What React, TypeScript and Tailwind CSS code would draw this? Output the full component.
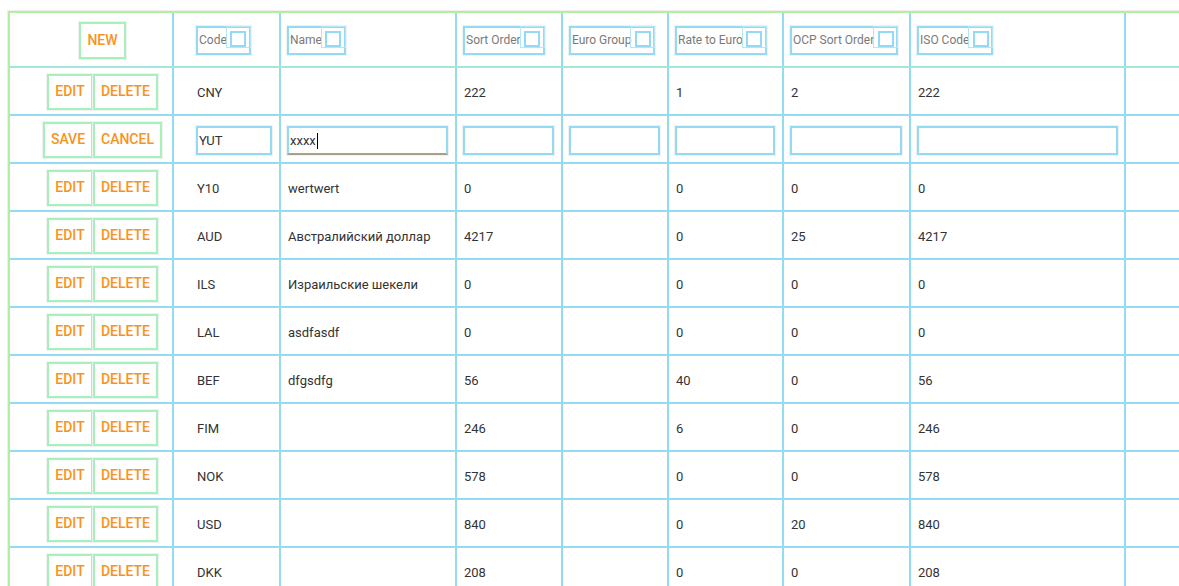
import React from "react";

const BLUE = "border-[#93daf2]";

const widths = ["w-[164px]", "w-[107px]", "w-[176px]", "w-[106px]", "w-[106px]", "w-[115px]", "w-[127px]", "w-[215px]"];

type Row = { code: string; name: string; sort: string; euro: string; rate: string; ocp: string; iso: string };

const rows: (Row | "edit")[] = [
  { code: "CNY", name: "", sort: "222", euro: "", rate: "1", ocp: "2", iso: "222" },
  "edit",
  { code: "Y10", name: "wertwert", sort: "0", euro: "", rate: "0", ocp: "0", iso: "0" },
  { code: "AUD", name: "Австралийский доллар", sort: "4217", euro: "", rate: "0", ocp: "25", iso: "4217" },
  { code: "ILS", name: "Израильские шекели", sort: "0", euro: "", rate: "0", ocp: "0", iso: "0" },
  { code: "LAL", name: "asdfasdf", sort: "0", euro: "", rate: "0", ocp: "0", iso: "0" },
  { code: "BEF", name: "dfgsdfg", sort: "56", euro: "", rate: "40", ocp: "0", iso: "56" },
  { code: "FIM", name: "", sort: "246", euro: "", rate: "6", ocp: "0", iso: "246" },
  { code: "NOK", name: "", sort: "578", euro: "", rate: "0", ocp: "0", iso: "578" },
  { code: "USD", name: "", sort: "840", euro: "", rate: "0", ocp: "20", iso: "840" },
  { code: "DKK", name: "", sort: "208", euro: "", rate: "0", ocp: "0", iso: "208" },
];

function Btn({ label, w, h = "h-[36px]" }: { label: string; w: string; h?: string }) {
  return (
    <div
      className={`${w} ${h} flex items-center justify-center border-2 border-[#a6f1b9] text-[14px] font-medium text-[#f7931e] shadow-[0_0_0_1px_#f1f1f1] bg-white`}
    >
      {label}
    </div>
  );
}

function Filter({ label }: { label: string }) {
  return (
    <div className={`relative mt-[2px] flex items-start h-[29px] border-2 ${BLUE} pl-[1px] pr-[22px] shadow-[0_0_0_1px_#f1f1f1]`}>
      <span className="text-[12px] text-[#7a7a7a] leading-[14px] pt-[5px] whitespace-nowrap">{label}</span>
      <span className="absolute right-[-2px] top-[-2px] w-[25px] h-[22px] border border-[#b5e6f6] flex items-center justify-center bg-transparent">
        <span className={`w-[16px] h-[16px] border-2 ${BLUE} mt-[3px]`} />
      </span>
    </div>
  );
}

function Input({ value, focused }: { value?: string; focused?: boolean }) {
  return (
    <div
      className={`w-full h-[29px] mt-[2px] border-2 ${BLUE} ${focused ? "border-b-[#a89f88]" : ""} flex items-center pl-[1px] pt-[1px] text-[13px] text-[#333] shadow-[0_0_0_1px_#f1f1f1]`}
    >
      {value}
      {focused && <span className="inline-block w-[1px] h-[16px] bg-black ml-[1px]" />}
    </div>
  );
}

function Cell({ i, children, cls = "" }: { i: number; children?: React.ReactNode; cls?: string }) {
  return (
    <div className={`${widths[i]} shrink-0 border-r-2 ${BLUE} flex items-center ${cls}`}>{children}</div>
  );
}

export default function App() {
  return (
    <div
      className="w-[1179px] h-[586px] overflow-hidden bg-white"
      style={{ fontFamily: "Roboto, 'Noto Sans', sans-serif" }}
    >
      <div className="ml-[8px] mt-[11px] w-[1260px] border-t-2 border-l-2 border-[#b1f0a3] shadow-[-1px_-1px_0_0_#eeeeee]">
        {/* header */}
        <div className="flex h-[55px] border-b-2 border-[#a0e6da]">
          <Cell i={0} cls="justify-center pl-[23px]">
            <div className="mt-[1px]">
              <Btn label="NEW" w="w-[47px]" h="h-[37px]" />
            </div>
          </Cell>
          <Cell i={1} cls="pl-[22px]">
            <Filter label="Code" />
          </Cell>
          <Cell i={2} cls="pl-[6px]">
            <Filter label="Name" />
          </Cell>
          <Cell i={3} cls="pl-[6px]">
            <Filter label="Sort Order" />
          </Cell>
          <Cell i={4} cls="pl-[6px]">
            <Filter label="Euro Group" />
          </Cell>
          <Cell i={5} cls="pl-[6px]">
            <Filter label="Rate to Euro" />
          </Cell>
          <Cell i={6} cls="pl-[6px]">
            <Filter label="OCP Sort Order" />
          </Cell>
          <Cell i={7} cls="pl-[6px]">
            <Filter label="ISO Code" />
          </Cell>
          <div className="flex-1" />
        </div>
        {rows.map((r, idx) =>
          r === "edit" ? (
            <div key={idx} className={`flex h-[48px] border-b-2 ${BLUE}`}>
              <Cell i={0} cls="justify-center pl-[23px]">
                <div className="flex mt-[1px]">
                  <Btn label="SAVE" w="w-[50px]" />
                  <Btn label="CANCEL" w="w-[69px]" />
                </div>
              </Cell>
              <Cell i={1} cls="pl-[22px] pr-[7px]">
                <Input value="YUT" />
              </Cell>
              <Cell i={2} cls="pl-[6px] pr-[7px]">
                <Input value="xxxx" focused />
              </Cell>
              <Cell i={3} cls="pl-[6px] pr-[7px]">
                <Input />
              </Cell>
              <Cell i={4} cls="pl-[6px] pr-[7px]">
                <Input />
              </Cell>
              <Cell i={5} cls="pl-[6px] pr-[7px]">
                <Input />
              </Cell>
              <Cell i={6} cls="pl-[6px] pr-[7px]">
                <Input />
              </Cell>
              <Cell i={7} cls="pl-[6px] pr-[6px]">
                <Input />
              </Cell>
              <div className="flex-1" />
            </div>
          ) : (
            <div key={idx} className={`flex h-[48px] border-b-2 ${BLUE} text-[13px] text-[#333]`}>
              <Cell i={0} cls="justify-center pl-[23px]">
                <div className="flex mt-[1px]">
                  <Btn label="EDIT" w="w-[46px]" />
                  <Btn label="DELETE" w="w-[65px]" />
                </div>
              </Cell>
              <Cell i={1} cls="pl-[23px] pt-[3px]">{r.code}</Cell>
              <Cell i={2} cls="pl-[7px] pt-[3px] whitespace-nowrap">{r.name}</Cell>
              <Cell i={3} cls="pl-[7px] pt-[3px]">{r.sort}</Cell>
              <Cell i={4} cls="pl-[7px] pt-[3px]">{r.euro}</Cell>
              <Cell i={5} cls="pl-[7px] pt-[3px]">{r.rate}</Cell>
              <Cell i={6} cls="pl-[7px] pt-[3px]">{r.ocp}</Cell>
              <Cell i={7} cls="pl-[7px] pt-[3px]">{r.iso}</Cell>
              <div className="flex-1" />
            </div>
          )
        )}
      </div>
    </div>
  );
}
